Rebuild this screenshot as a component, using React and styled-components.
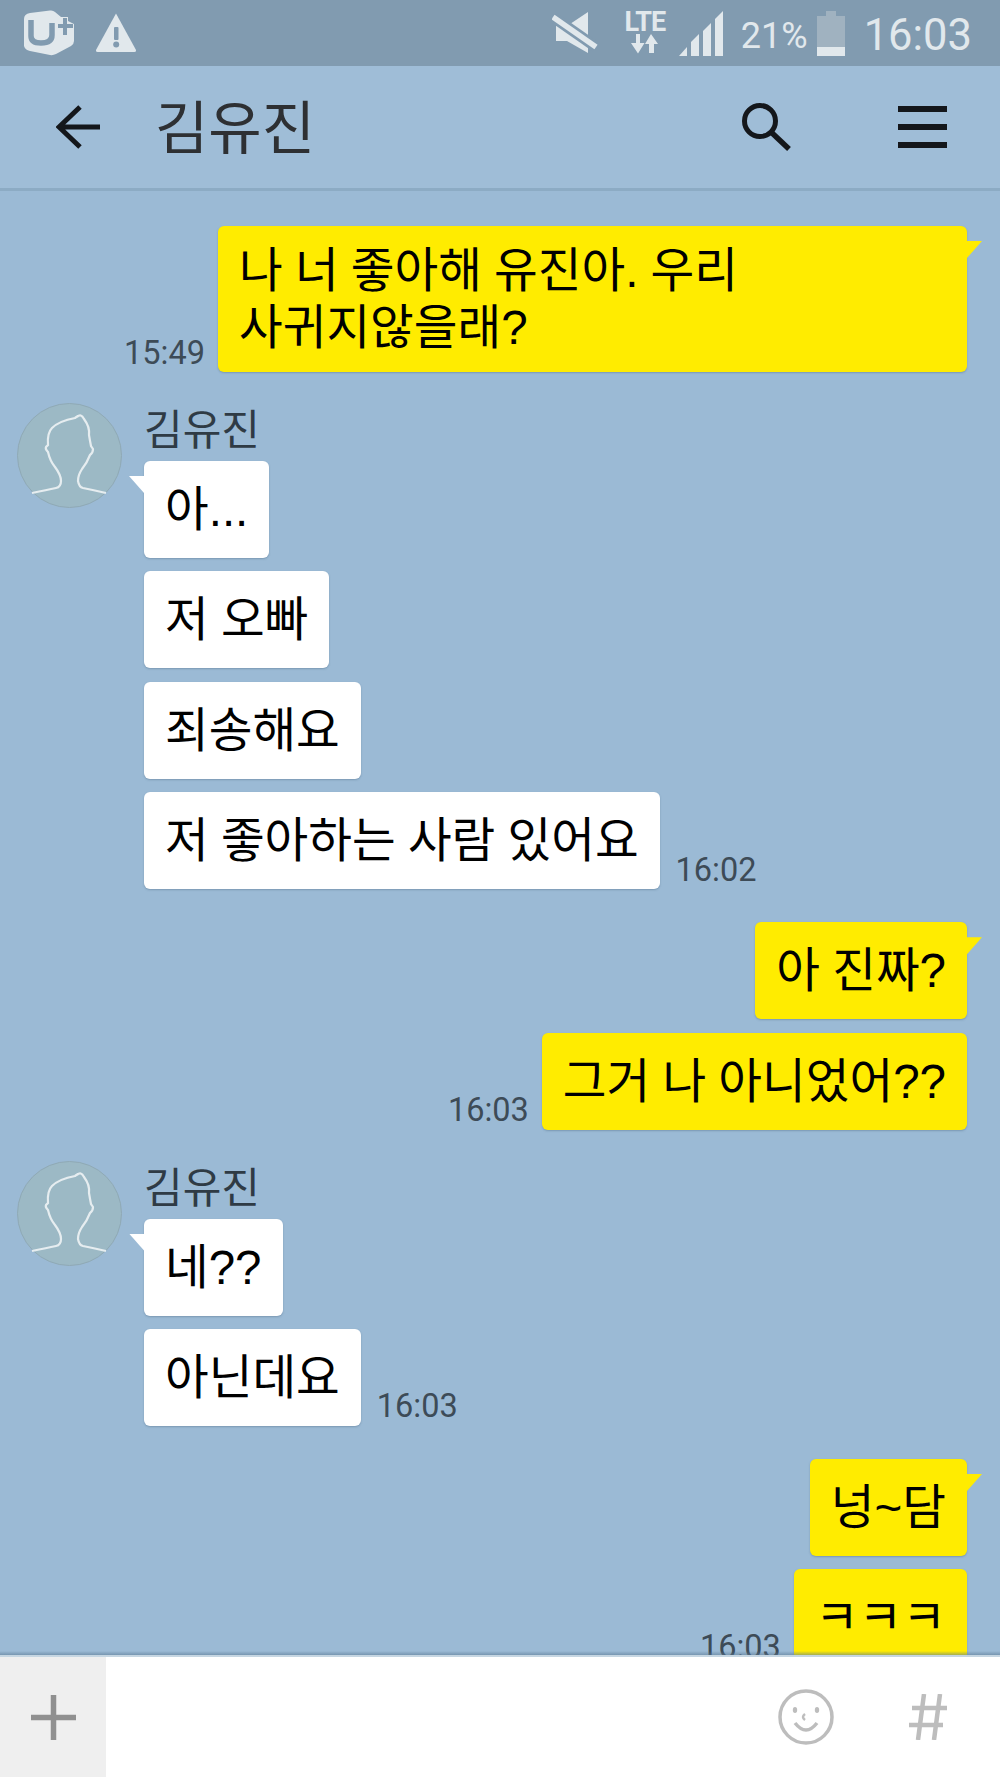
import React from "react"
import styled, { createGlobalStyle } from "styled-components"

const GlobalStyle = createGlobalStyle`
  html, body {
    margin: 0;
    padding: 0;
    background: #9bbad5;
  }
  * {
    box-sizing: border-box;
  }
`

const Screen = styled.div`
  width: 1000px;
  height: 1777px;
  display: flex;
  flex-direction: column;
  overflow: hidden;
  font-family: "Noto Sans CJK KR", "Noto Sans", sans-serif;
  background: #9bbad5;
`

const StatusBar = styled.div`
  height: 66px;
  flex: none;
  display: flex;
  align-items: center;
  justify-content: space-between;
  padding: 0 28px 0 23px;
  background: #819bb0;
  color: #e1e8ec;
`
const StatusGroup = styled.div`
  display: flex;
  align-items: center;
`
const LteBox = styled.div`
  width: 46px;
  height: 44px;
  margin: 0 11px 0 24px;
  display: flex;
  flex-direction: column;
  align-items: center;
`
const LteText = styled.span`
  font: 700 27px/23px "Roboto", sans-serif;
  letter-spacing: -1px;
`
const Percent = styled.span`
  font: 400 36px/1 "Roboto", sans-serif;
  margin: 5px 9px 0 17px;
`
const Clock = styled.span`
  font: 400 43.500px/1 "Roboto", sans-serif;
  margin: 6px 0 0 19px;
`

const Header = styled.div`
  height: 125px;
  flex: none;
  display: flex;
  align-items: center;
  padding: 0 53px 0 56px;
  background: #9fbdd7;
  border-bottom: 3px solid #8cabc4;
`
const Title = styled.h1`
  flex: 1;
  margin: 0 0 6px 55px;
  font-size: 58px;
  line-height: 1;
  font-weight: 400;
  color: #2e3033;
`
const SearchSlot = styled.div`
  margin-right: 107px;
  display: flex;
`

const Chat = styled.div`
  flex: 1;
  min-height: 0;
  overflow: hidden;
  padding: 35px 33px 0 17px;
  position: relative;

  &::after {
    content: "";
    position: absolute;
    left: 0;
    right: 0;
    bottom: 0;
    height: 4px;
    background: linear-gradient(rgba(90, 120, 145, 0), rgba(90, 120, 145, 0.55));
  }
`

const OutGroup = styled.div`
  display: flex;
  flex-direction: column;
  align-items: flex-end;
  gap: 13.400px;
  margin-bottom: 31px;
`
const InGroup = styled.div`
  display: flex;
  gap: 22px;
  margin-bottom: 33px;
`
const InColumn = styled.div`
  display: flex;
  flex-direction: column;
  align-items: flex-start;
  gap: 13.400px;
`
const Name = styled.div`
  height: 44.600px;
  font-size: 42px;
  line-height: 47px;
  color: #2f3b45;
`
const Row = styled.div`
  display: flex;
  align-items: flex-end;
  gap: ${(p) => (p.$mine ? 13 : 16)}px;
`
const Time = styled.span`
  font: 400 32.500px/1 "Roboto", sans-serif;
  color: #3d4b57;
  padding-bottom: 3px;
  white-space: nowrap;
`
const Bubble = styled.div`
  position: relative;
  display: flex;
  align-items: center;
  max-width: 749px;
  min-height: 97px;
  padding: 16px 21px;
  font-family: "Liberation Sans", "Noto Sans CJK KR", sans-serif;
  font-size: 47.500px;
  line-height: 57px;
  word-spacing: -1px;
  color: #000;
  word-break: keep-all;
  border-radius: 6px;
  background: ${(p) => (p.$mine ? "#ffec00" : "#fff")};
  box-shadow: 0 1px 2px rgba(60, 90, 115, 0.35);

  ${(p) =>
    p.$tail &&
    `
    &::before {
      content: "";
      position: absolute;
      top: 15px;
      width: 15px;
      height: 17px;
      background: ${p.$mine ? "#ffec00" : "#fff"};
      ${
        p.$mine
          ? "right: -15px; clip-path: polygon(0 0, 100% 0, 0 100%);"
          : "left: -15px; clip-path: polygon(0 0, 100% 0, 100% 100%);"
      }
    }
  `}
`

const InputBar = styled.div`
  height: 122px;
  flex: none;
  display: flex;
  align-items: stretch;
  background: #fff;
  border-top: 2px solid #c6d6e2;
`
const PlusPanel = styled.div`
  width: 106px;
  display: flex;
  align-items: center;
  justify-content: center;
  background: #efefef;
`
const InputSpace = styled.div`
  flex: 1;
`
const InputIcons = styled.div`
  display: flex;
  align-items: center;
  gap: 75px;
  padding-right: 53px;
`

const UPlusLogo = () => (
  <svg width="52" height="46" viewBox="0 0 52 46">
    <path
      d="M1 9 Q1 4 7 3 L27 0.500 Q30 0 32 2 L38 7 L45 7 L45 11 L51 14 L51 31 Q51 34 48 36 L33 44 Q30 45.500 27 45 L7 41 Q2 40 1 36 Z"
      fill="#e1e8ec"
    />
    <path
      d="M8 10 V26 Q8 33 18 33 Q29 33 29 25 V13"
      fill="none"
      stroke="#819bb0"
      strokeWidth="5.500"
    />
    <path d="M35 16 H50 M42 8 V25" stroke="#819bb0" strokeWidth="4" />
  </svg>
)

const WarningIcon = () => (
  <svg width="42" height="40" viewBox="0 0 42 40" style={{ marginLeft: 20 }}>
    <path d="M21 0.500 L41 37 Q41.500 39 39.500 39 L2.500 39 Q0.500 39 1 37 Z" fill="#e1e8ec" />
    <rect x="19" y="14" width="4.500" height="13" rx="1" fill="#819bb0" />
    <circle cx="21.200" cy="31.500" r="3" fill="#819bb0" />
  </svg>
)

const MuteIcon = () => (
  <svg width="46" height="44" viewBox="0 0 46 44">
    <path d="M4 15 H15 L36 1 V42 L15 30 H4 Z" fill="#e1e8ec" />
    <path d="M1 6 L44 36" stroke="#819bb0" strokeWidth="11" />
    <path d="M1 6 L44 36" stroke="#e1e8ec" strokeWidth="5.500" />
  </svg>
)

const LteArrows = () => (
  <svg width="28" height="20" viewBox="0 0 28 20">
    <path d="M5 0 H9 V9 H13.500 L7 19.500 L0 9 H5 Z" fill="#e1e8ec" />
    <path d="M20 0 L27 10 H23 V19 H18 V10 H14 Z" fill="#e1e8ec" />
  </svg>
)

const SignalIcon = () => (
  <svg width="45" height="45" viewBox="0 0 45 45">
    <path d="M0 45 L8 36 V45 Z" fill="#e1e8ec" />
    <path d="M12 31 L20 23 V45 H12 Z" fill="#e1e8ec" />
    <path d="M24 20 L32 12 V45 H24 Z" fill="#e1e8ec" />
    <path d="M36 8 L44 0 V45 H36 Z" fill="#e1e8ec" />
  </svg>
)

const BatteryIcon = () => (
  <svg width="28" height="45" viewBox="0 0 28 45">
    <path d="M9 0 H19 V5 H28 V36 H0 V5 H9 Z" fill="#a0b2c0" />
    <rect y="36" width="28" height="9" fill="#e1e8ec" />
  </svg>
)

const BackIcon = () => (
  <svg width="44" height="44" viewBox="0 0 44 44">
    <path d="M44 22 H4 M24 2 L3 22 L24 42" fill="none" stroke="#14171b" strokeWidth="5" />
  </svg>
)

const SearchIcon = () => (
  <svg width="49" height="49" viewBox="0 0 49 49">
    <circle cx="18" cy="18" r="15.500" fill="none" stroke="#14171b" strokeWidth="5" />
    <path d="M29 29 L47 46" stroke="#14171b" strokeWidth="5.500" />
  </svg>
)

const MenuIcon = () => (
  <svg width="49" height="42" viewBox="0 0 49 42">
    <path d="M0 3 H49 M0 21 H49 M0 39 H49" stroke="#14171b" strokeWidth="6" />
  </svg>
)

const PlusIcon = () => (
  <svg width="45" height="45" viewBox="0 0 45 45">
    <path d="M22.500 0 V45 M0 22.500 H45" stroke="#909090" strokeWidth="5.500" />
  </svg>
)

const SmileIcon = () => (
  <svg width="56" height="56" viewBox="0 0 56 56">
    <circle cx="28" cy="28" r="26" fill="none" stroke="#bdbdbd" strokeWidth="3.500" />
    <ellipse cx="17" cy="21" rx="2.200" ry="3" fill="#bdbdbd" />
    <ellipse cx="39" cy="21" rx="2.200" ry="3" fill="#bdbdbd" />
    <path d="M27 25 Q23 28 27 31" fill="none" stroke="#bdbdbd" strokeWidth="2.500" />
    <path d="M17 34 Q28 48 39 34" fill="none" stroke="#bdbdbd" strokeWidth="3.500" />
  </svg>
)

const HashIcon = () => (
  <svg width="38" height="46" viewBox="0 0 38 46">
    <path
      d="M15 0 L9 46 M31 0 L25 46 M3 14 H38 M0 31 H34"
      fill="none"
      stroke="#bdbdbd"
      strokeWidth="4.500"
    />
  </svg>
)

const Avatar = () => (
  <svg width="105" height="105" viewBox="0 0 105 105" style={{ flex: "none" }}>
    <circle cx="52.500" cy="52.500" r="52" fill="#9cb9c5" stroke="#8fa9b5" strokeWidth="1" />
    <path
      d="M15 90 Q30 87 39 85 Q44 84 44 78 Q44 72 38 64 Q33 58 31 49 Q28 46 29 44 L31 42 Q30 30 35 25 Q42 18 58 15 Q62 12 60 14 Q64 10 67 16 Q73 24 72 32 Q73 38 74 43 L76 46 Q76 50 73 52 Q70 60 65 66 Q61 72 61 78 Q62 84 66 85 Q76 87 89 90"
      fill="none"
      stroke="#e6edf0"
      strokeWidth="2.200"
    />
  </svg>
)

const Incoming = ({ lines, time }) => (
  <InGroup>
    <Avatar />
    <InColumn>
      <Name>김유진</Name>
      {lines.map((line, i) => (
        <Row key={line}>
          <Bubble $tail={i === 0}>{line}</Bubble>
          {i === lines.length - 1 && <Time>{time}</Time>}
        </Row>
      ))}
    </InColumn>
  </InGroup>
)

const Outgoing = ({ lines, time }) => (
  <OutGroup>
    {lines.map((line, i) => (
      <Row $mine key={line}>
        {i === lines.length - 1 && <Time>{time}</Time>}
        <Bubble $mine $tail={i === 0}>
          {line}
        </Bubble>
      </Row>
    ))}
  </OutGroup>
)

const App = () => (
  <Screen>
    <GlobalStyle />
    <StatusBar>
      <StatusGroup>
        <UPlusLogo />
        <WarningIcon />
      </StatusGroup>
      <StatusGroup>
        <MuteIcon />
        <LteBox>
          <LteText>LTE</LteText>
          <LteArrows />
        </LteBox>
        <SignalIcon />
        <Percent>21%</Percent>
        <BatteryIcon />
        <Clock>16:03</Clock>
      </StatusGroup>
    </StatusBar>
    <Header>
      <BackIcon />
      <Title>김유진</Title>
      <SearchSlot>
        <SearchIcon />
      </SearchSlot>
      <MenuIcon />
    </Header>
    <Chat>
      <Outgoing lines={["나 너 좋아해 유진아. 우리 사귀지않을래?"]} time="15:49" />
      <Incoming lines={["아...", "저 오빠", "죄송해요", "저 좋아하는 사람 있어요"]} time="16:02" />
      <Outgoing lines={["아 진짜?", "그거 나 아니었어??"]} time="16:03" />
      <Incoming lines={["네??", "아닌데요"]} time="16:03" />
      <Outgoing lines={["넝~담", "ㅋㅋㅋ"]} time="16:03" />
    </Chat>
    <InputBar>
      <PlusPanel>
        <PlusIcon />
      </PlusPanel>
      <InputSpace />
      <InputIcons>
        <SmileIcon />
        <HashIcon />
      </InputIcons>
    </InputBar>
  </Screen>
)

export default App
